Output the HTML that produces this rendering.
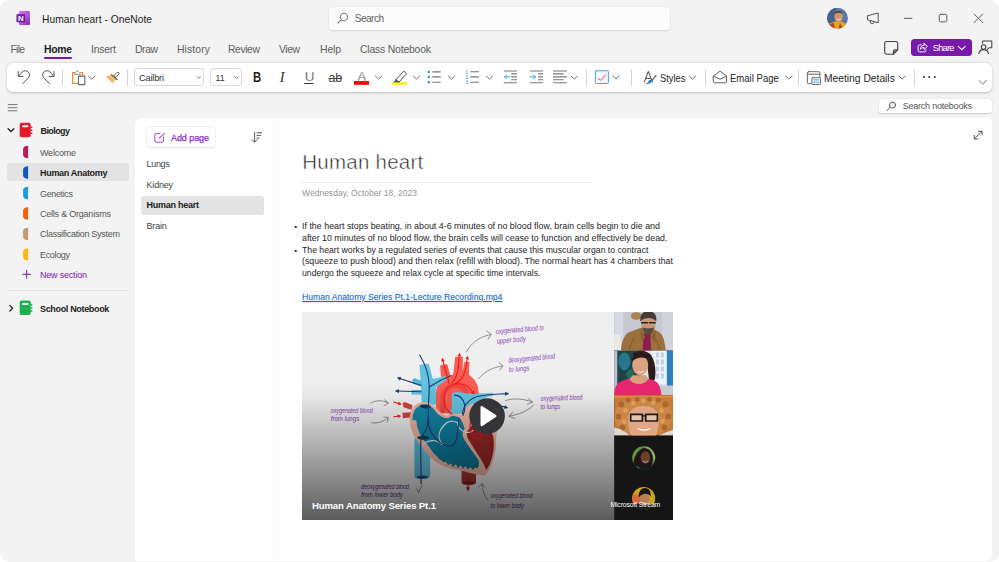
<!DOCTYPE html>
<html lang="en"><head><meta charset="utf-8"><title>Human heart - OneNote</title>
<style>
html,body{margin:0;padding:0;background:#fff}
body{width:999px;height:562px;position:relative;overflow:hidden;font-family:"Liberation Sans",sans-serif}
.abs,.t,svg{position:absolute}
.t{white-space:nowrap;transform-origin:0 50%}
.win{left:0;top:0;width:999px;height:562px;background:#f3f3f3;border-radius:9px}
.search{left:328.5px;top:7px;width:341.5px;height:22.5px;background:#fbfbfb;border-radius:4px;box-shadow:0 0 0 .6px #e6e6e6,0 1px 1.5px rgba(0,0,0,.16);}
.homeul{left:44px;top:56.5px;width:28px;height:2px;background:#7719aa;border-radius:1px}
.ribbon{left:7px;top:63.2px;width:985px;height:28.6px;background:#fff;border-radius:6px;box-shadow:0 .5px 2.5px rgba(0,0,0,.22)}
.sep{width:1px;top:68.8px;height:16.8px;background:#d6d6d6}
.box{top:68.4px;height:17.2px;background:#fff;border:.8px solid #d8d8d8;border-radius:3px;box-sizing:border-box}
.share{left:910.6px;top:38.7px;width:61.8px;height:17.7px;background:#7719aa;border-radius:3.5px}
.snb{left:879.2px;top:98.6px;width:112.9px;height:14.6px;background:#fff;border-radius:3px;box-shadow:0 .5px 1.5px rgba(0,0,0,.18)}
.panel{left:135px;top:118.3px;width:857.4px;height:442.3px;background:#fff;border-radius:6px 5px 6px 0}
.pdiv{left:273px;top:119px;width:1px;height:441px;background:#f4f4f4}
.selsec{left:7px;top:163px;width:122.3px;height:18.4px;background:#e3e3e3;border-radius:3px}
.sbsep{left:7px;top:290px;width:122px;height:1px;background:#e3e3e3}
.addpage{left:147.2px;top:126.600px;width:68.300px;height:20.800px;background:#fff;border-radius:4px;box-shadow:0 0 0 .7px #ebe7ee,0 .5px 1.2px rgba(0,0,0,.10);box-sizing:border-box}
.selpage{left:141px;top:195.8px;width:122.6px;height:19.5px;background:#e3e3e3;border-radius:3px}
.trule{left:302px;top:182px;width:290px;height:1px;background:#ececec}
</style></head><body>
<div class="abs win"></div>
<div class="abs search"></div>
<div class="abs homeul"></div>
<div class="abs share"></div>
<div class="abs ribbon"></div>
<div class="abs sep" style="left:62px"></div>
<div class="abs sep" style="left:126.8px"></div>
<div class="abs sep" style="left:586.2px"></div>
<div class="abs sep" style="left:630.8px"></div>
<div class="abs sep" style="left:704.6px"></div>
<div class="abs sep" style="left:798.2px"></div>
<div class="abs sep" style="left:914px"></div>
<div class="abs box" style="left:134px;width:69.5px"></div>
<div class="abs box" style="left:210px;width:31.5px"></div>
<div class="abs snb"></div>
<div class="abs panel"></div>
<div class="abs pdiv"></div>
<div class="abs selsec"></div>
<div class="abs sbsep"></div>
<div class="abs addpage"></div>
<div class="abs selpage"></div>
<div class="abs trule"></div>
<svg style="left:0;top:0" width="999" height="562" viewBox="0 0 999 562" fill="none" stroke-linecap="round" stroke-linejoin="round">
<defs>
<linearGradient id="gp1" x1="0" y1="0" x2="1" y2="1"><stop offset="0" stop-color="#d575f2"/><stop offset=".55" stop-color="#b552dc"/><stop offset="1" stop-color="#7a1fb0"/></linearGradient>
<linearGradient id="gp2" x1="0" y1="0" x2="1" y2="1"><stop offset="0" stop-color="#8a2dbb"/><stop offset="1" stop-color="#5b0f8c"/></linearGradient>
<clipPath id="avc"><circle cx="837.5" cy="18.2" r="10.4"/></clipPath>
</defs>
<!-- OneNote logo -->
<rect x="18.9" y="10.9" width="11" height="14.2" rx="1.1" fill="url(#gp1)"/>
<rect x="16.4" y="13.9" width="8.7" height="8.4" rx="1" fill="url(#gp2)"/>
<text x="20.75" y="20.9" font-size="7.8" font-weight="700" fill="#fff" text-anchor="middle" font-family="Liberation Sans, sans-serif">N</text>
<!-- title search icon -->
<g stroke="#757575" stroke-width="1.05"><circle cx="344" cy="16.9" r="3.6"/><path d="M341.4 19.6 337.9 23.1"/></g>
<!-- avatar -->
<g clip-path="url(#avc)">
<rect x="827" y="7.5" width="21" height="21.5" fill="#5a79ab"/>
<rect x="827" y="7.5" width="9" height="21.5" fill="#48628f"/>
<path d="M827 29 l2.5-5.5 6-2.2 6.5 .2 5 3 1 4.5z" fill="#e7a21b"/>
<path d="M829 29 l1.5-5 3-1.2 1.5 6.2z" fill="#c23b25"/>
<path d="M840 23 l3 6.2 h-4.5z" fill="#b8321f"/>
<ellipse cx="838.6" cy="16.6" rx="4.3" ry="5.3" fill="#cf9676"/>
<path d="M834 14.5 c.5-4.5 8-5.5 9.3-.3 c-2.5-1.5-6-1.7-9.3 .3z" fill="#6a4631"/>
<path d="M836.8 19.4 q2 1.5 4 0" stroke="#fff" stroke-width=".7"/>
</g>
<!-- megaphone -->
<g stroke="#505050" stroke-width="1"><path d="M878.2 13.3v9.4l-10.8-2.9v-3.6z"/><path d="M870.3 20.7v1.2a1.9 1.9 0 0 0 3.7.6"/></g>
<!-- window buttons -->
<g stroke="#555" stroke-width=".95"><path d="M904.3 18.3h7.6"/><rect x="939.3" y="14.3" width="7.5" height="7.6" rx="1.4"/><path d="M974.1 14l8.6 8.6M982.7 14l-8.6 8.6"/></g>
<!-- sticky note -->
<g stroke="#444" stroke-width="1.15"><path d="M886.6 41.5h9.2a1.9 1.9 0 0 1 1.9 1.9v6.5l-4.3 4.3h-6.8a1.9 1.9 0 0 1-1.9-1.9v-8.9a1.9 1.9 0 0 1 1.9-1.9z"/><path d="M897.6 49.9h-2.6a1.6 1.6 0 0 0-1.6 1.6v2.6"/><path d="M897 50.6l-3 3v-1.800a1.200 1.200 0 0 1 1.200-1.200z" fill="#555" stroke="none"/></g>
<!-- share icon -->
<g stroke="#fff" stroke-width=".95"><path d="M921.3 44.9h-1.7a1.5 1.5 0 0 0-1.5 1.5v4a1.5 1.5 0 0 0 1.5 1.5h4.8a1.5 1.5 0 0 0 1.5-1.5v-.7"/><path d="M924.1 43.4l3.3 3-3.3 3v-1.9c-1.8 0-3 .6-3.8 1.9.2-2.6 1.6-4 3.8-4.2z"/><path d="M958.2 46.4l3.5 3.3 3.5-3.3" stroke-width="1.05"/></g>
<!-- person feedback -->
<g stroke="#444" stroke-width="1.05"><circle cx="983.6" cy="47" r="2.3"/><path d="M978.8 53.6c.4-2.6 2.2-4 4.8-4s4.4 1.4 4.8 4"/><path d="M982.6 43.2v-2.2h9.2v6.7h-2.6l-1.7 1.7"/></g>
<!-- ribbon: undo / redo -->
<g stroke="#555" stroke-width="1"><path id="undo" d="M18.4 76.3 22.2 72A4.2 4.2 0 0 1 28.3 78L22.6 83.6M18.2 71.5v4.9h4.9"/><use href="#undo" transform="translate(72.2 0) scale(-1 1)"/></g>
<!-- paste -->
<g stroke-width="1.25"><path d="M75 72.700h-2.400v10.600h5.200M80.200 72.700h2.400v2.700" stroke="#ee8f2f" stroke-linejoin="miter" stroke-linecap="butt"/><path d="M74.500 74.100l2.900-3.700 2.900 3.700z" stroke="#8a8a8a" stroke-width=".9" fill="#fff"/><rect x="78.400" y="76.100" width="6.400" height="8.500" rx=".7" stroke="#606060" stroke-width="1.100" fill="#fff"/></g>
<!-- format painter -->
<g><path d="M106.200 76.400l5.300-1.300 4.700 4.400-3.900 3.500z" fill="#f6a64f"/><path d="M108.600 77l4.600 4.300M110.600 76.300l3.700 3.600" stroke="#fde0c0" stroke-width=".7"/><rect x="-1.150" y="-5.800" width="2.300" height="5.800" rx=".9" transform="translate(114.400 76.800) rotate(45)" fill="#fff" stroke="#555" stroke-width=".9"/><path d="M111.300 74.300l5.900 5.400" stroke="#555" stroke-width="1.100"/></g>
<!-- chevrons -->
<g stroke="#666" stroke-width=".95">
<path d="M88.400 76.100l3.250 3 3.250-3"/>
<path d="M197 76.700l1.750 1.750 1.750-1.750"/><path d="M234.900 76.700l1.750 1.750 1.750-1.750"/>
<path d="M375.4 76l3.25 3.1 3.25-3.1"/><path d="M413.2 76l3.25 3.1 3.25-3.1"/><path d="M448.2 76l3.25 3.1 3.25-3.1"/><path d="M486.2 76l3.25 3.1 3.25-3.1"/>
<path d="M571.1 76l3.25 3.1 3.25-3.1"/><path d="M612.8 76l3.2 3.1 3.2-3.1"/><path d="M689.3 76l3.2 3.1 3.2-3.1"/><path d="M785.7 76l3.2 3.1 3.2-3.1"/><path d="M899 76l3.2 3.1 3.2-3.1"/>
<path d="M978.9 80.4l3.8 3.7 3.8-3.7"/>
</g>
<!-- underline bar for U -->
<path d="M304.6 83.5h8.6" stroke="#333" stroke-width="1"/>
<!-- font colour / highlighter -->
<rect x="354" y="81" width="15" height="3.8" fill="#fe0000"/>
<rect x="391.9" y="82.2" width="15" height="2.6" fill="#fff000"/>
<g stroke="#555" stroke-width="1"><path d="M396.2 79.3l6.6-7.2a1.7 1.7 0 0 1 2.4-.1l.4.4a1.7 1.7 0 0 1 .1 2.4l-6.6 7.1z"/><path d="M396.2 79.3l-.9 1.6-1.4 1 2.6-.1 2.5.1" fill="#555"/></g>
<!-- bullets -->
<g fill="#1479d4"><rect x="427.8" y="70.9" width="2" height="2"/><rect x="427.8" y="75.9" width="2" height="2"/><rect x="427.8" y="81.2" width="2" height="2"/></g>
<g stroke="#777" stroke-width="1.1" stroke-linecap="butt"><path d="M432.3 71.9h8.4M432.3 76.9h8.4M432.3 82.2h8.4"/><path d="M470.3 71.7h8.7M470.3 76.9h8.7M470.3 82.2h8.7"/>
<path d="M503.8 71h13.1M511.2 73.9h5.7M511.2 76.9h5.7M511.2 79.8h5.7M503.8 82.7h13.1"/>
<path d="M530 71h13.1M538 73.9h5.1M538 76.9h5.1M538 79.8h5.1M530 82.7h13.1"/>
<path d="M553 71h14M553 73.9h10.8M553 76.9h14M553 79.8h10.8M553 82.7h14"/></g>
<g font-family="Liberation Sans, sans-serif" font-size="4.8" font-weight="400" fill="#1f7fd6" text-anchor="middle"><text x="466.9" y="73.6">1</text><text x="466.9" y="78.7">2</text><text x="466.9" y="83.9">3</text></g>
<g stroke="#2b9be0" stroke-width=".95"><path d="M509.8 76.9h-5.2M506.6 74.8l-2.1 2.1 2.1 2.1"/><path d="M530.3 76.9h5.2M533.4 74.8l2.1 2.1-2.1 2.1"/></g>
<!-- checkbox -->
<rect x="595.4" y="70.8" width="13" height="12.7" rx=".8" fill="#f5fafe" stroke="#4aa0e2" stroke-width="1"/>
<path d="M598.2 78.5l2.4 1.8 5-5.3" stroke="#ea3e4c" stroke-width=".95"/>
<!-- styles -->
<g><path d="M644.3 82l4-10.7 4 10.7M645.8 78.4h5" stroke="#444" stroke-width="1"/><path d="M655.900 75.600l-4.500 5.600" stroke="#606060" stroke-width="1.300"/><path d="M645.100 82.900c2.200 1.900 6.200.900 7-2.400-1.300-.900-3-.400-3.700.900-.700 1.200-1.800 1.700-3.300 1.500z" fill="#2b7cd3"/></g>
<!-- email -->
<g stroke="#555" stroke-width=".95"><path d="M713.4 76l6.6-4.8 6.6 4.8v5.9a.9.9 0 0 1-.9.9h-11.4a.9.9 0 0 1-.9-.9z"/><path d="M713.5 76.3l6.5 2.9 6.5-2.9"/></g>
<!-- meeting -->
<g stroke="#606060" stroke-width=".95"><rect x="807.4" y="71.7" width="12.5" height="11.9" rx="1" fill="#fff"/><path d="M807.4 74.2h12.5" /><rect x="811.9" y="77.7" width="8.7" height="6.8" rx=".8" fill="#fff"/><path d="M813.6 79.9h5.4M813.6 82.2h5.4" stroke="#3a96dd"/></g>
<!-- more dots -->
<g fill="#333"><circle cx="923.8" cy="77" r="1.05"/><circle cx="929.3" cy="77" r="1.05"/><circle cx="934.8" cy="77" r="1.05"/></g>
<!-- search notebooks icon -->
<g stroke="#555" stroke-width="1"><circle cx="892.5" cy="105.1" r="3"/><path d="M890.3 107.3l-3.3 3.2"/></g>
<!-- hamburger -->
<path d="M8.2 104.6h8.8M8.2 107.7h8.8M8.2 110.8h8.8" stroke="#6a6a6a" stroke-width=".9"/>
<!-- sidebar chevrons -->
<g stroke="#222" stroke-width="1.350"><path d="M8.100 128.800l2.850 2.700 2.850-2.700"/><path d="M9.800 305.400l2.800 2.850-2.800 2.850"/></g>
<!-- notebooks -->
<g><rect x="19.7" y="122.8" width="11" height="14.4" rx="1.9" fill="#e3182d"/><rect x="22.300" y="125.300" width="6" height="2" rx=".5" fill="#fff"/><path d="M30.600 127.200h1.700M30.600 130.200h1.700M30.600 133.200h1.700" stroke="#e3182d" stroke-width="1.600" stroke-linecap="butt"/></g>
<g><rect x="19.7" y="300.4" width="11" height="14.7" rx="1.9" fill="#1db24f"/><rect x="22.300" y="303" width="6" height="2" rx=".5" fill="#fff"/><path d="M30.600 304.900h1.700M30.600 307.900h1.700M30.600 310.900h1.700" stroke="#1db24f" stroke-width="1.600" stroke-linecap="butt"/></g>
<!-- section tabs -->
<g>
<path id="tab" d="M28.1 145.8c-3.2.2-5 1.3-5 3.5v5.4c0 2.2 1.8 3.3 5 3.5z" fill="#c3175b"/>
<path d="M28.1 166.3c-3.2.2-5 1.3-5 3.5v5.4c0 2.2 1.8 3.3 5 3.5z" fill="#0f5bb5"/>
</g>
<path d="M28.1 186.8c-3.2.2-5 1.3-5 3.5v5.4c0 2.2 1.8 3.3 5 3.5z" fill="#1b9fe0"/>
<path d="M28.1 207.3c-3.2.2-5 1.3-5 3.5v5.4c0 2.2 1.8 3.3 5 3.5z" fill="#f4620e"/>
<path d="M28.1 227.8c-3.2.2-5 1.3-5 3.5v5.4c0 2.2 1.8 3.3 5 3.5z" fill="#c19a6f"/>
<path d="M28.1 248.2c-3.2.2-5 1.3-5 3.5v5.4c0 2.2 1.8 3.3 5 3.5z" fill="#fdb812"/>
<path d="M26.7 270.3v8M22.7 274.3h8" stroke="#7719aa" stroke-width="1"/>
<!-- add page icon -->
<g stroke="#a252d3" stroke-width="1.100"><path d="M160 133.500h-3.300a1.900 1.900 0 0 0-1.900 1.900v4.900a1.900 1.900 0 0 0 1.900 1.900h4.900a1.900 1.900 0 0 0 1.900-1.900v-3.300"/><path d="M159.300 138.400l5-5.100"/></g>
<!-- sort icon -->
<g stroke="#555" stroke-width="1"><path d="M254.6 132.6v9.3M252 139.6l2.6 2.6 2.6-2.6"/><path d="M257 132.8h4.6M257 135.4h3.4M257 138h2.1"/></g>
<!-- expand icon -->
<g stroke="#555" stroke-width="1"><path d="M974.4 138.8l7.5-7.3M978.4 131.3h3.7v3.7M974.2 135.3v3.7h3.7"/></g>
</svg>

<svg style="left:301.6px;top:311.5px" width="371.6" height="208.4" viewBox="301.6 311.5 371.6 208.4" fill="none" stroke-linecap="round" stroke-linejoin="round" font-family="Liberation Sans, sans-serif">
<defs>
<linearGradient id="vshade" x1="0" y1="0" x2="0" y2="1"><stop offset="0" stop-color="#000" stop-opacity="0"/><stop offset=".34" stop-color="#000" stop-opacity="0"/><stop offset=".42" stop-color="#000" stop-opacity=".05"/><stop offset="1" stop-color="#000" stop-opacity=".62"/></linearGradient>
<linearGradient id="teal" x1="0" y1="0" x2="1" y2="1"><stop offset="0" stop-color="#1789a9"/><stop offset=".45" stop-color="#0e7f9f"/><stop offset="1" stop-color="#09708f"/></linearGradient>
<clipPath id="vclip"><rect x="301.6" y="311.5" width="371.6" height="208.4"/></clipPath>
<clipPath id="t1"><rect x="613.7" y="311.5" width="59.5" height="38.6"/></clipPath>
<clipPath id="t2"><rect x="613.7" y="350.1" width="59.5" height="44.6"/></clipPath>
<clipPath id="t3"><rect x="613.7" y="394.7" width="59.5" height="40.4"/></clipPath>
<clipPath id="a1"><circle cx="643.3" cy="457.3" r="11.5"/></clipPath>
<clipPath id="a2"><circle cx="643.3" cy="498" r="11.5"/></clipPath>
<marker id="mb" viewBox="0 0 6 6" refX="4" refY="3" markerWidth="3.5" markerHeight="3.5" orient="auto"><path d="M0 0L6 3 0 6z" fill="#1f3f7d"/></marker>
<marker id="mr" viewBox="0 0 6 6" refX="4" refY="3" markerWidth="3.5" markerHeight="3.5" orient="auto"><path d="M0 0L6 3 0 6z" fill="#f21414"/></marker>
<marker id="mdr" viewBox="0 0 6 6" refX="4" refY="3" markerWidth="3.8" markerHeight="3.8" orient="auto"><path d="M0 0L6 3 0 6z" fill="#c01818"/></marker>
</defs>
<g clip-path="url(#vclip)">
<rect x="301.6" y="311.5" width="312.2" height="208.4" fill="#efefef"/>
<!-- inferior vena cava -->
<path d="M414.2 438h15.6v38.4a7.8 2.2 0 0 1-15.6 0z" fill="#62c3df"/>
<path d="M414.2 438h5v40h-5z" fill="#4fb2d2" opacity=".55"/>
<ellipse cx="422" cy="476.5" rx="5.6" ry="1.5" fill="#1c4f6c"/>
<!-- superior vena cava + left stubs -->
<path d="M419 364.200l9.500-.900 3.400 13.500 3.600 7.500 1.200 20h-15.400l-.600-16z" fill="#62c3df"/>
<path d="M411.6 379.8l2.1-2.4 8.3 3.3-.9 4.4-8.2-2.6z" fill="#52b6d6"/>
<path d="M411.2 389.6h10.5v4.3h-10.5z" fill="#52b6d6"/>
<path d="M413 381l8.6 2.8v2.2l-9-2.8zM412.5 391h9v2.6h-9z" fill="#62c3df"/>
<!-- branch from SVC to upper right (behind aorta) -->

<!-- aorta -->
<path d="M435.6 413v-18.5c0-6.5 1.6-12 5.3-16.2l-1.2-13.2 7-1.6 3.6 12.6 2.6-2.5 1.9-17.3h7.7l-.3 14.2 1.9-9.2h4.9l-.4 13.3c5.9 3.7 9.6 9.8 9.6 17.600v20.800z" fill="#f95c53"/>
<path d="M440 412v-14c0-9 6.400-15.500 14.700-15.500 7.300 0 12.700 4 14.300 10.500l-4.600 1c-1.400-4.300-5-6.700-9.700-6.700-5.600 0-9.700 4.300-9.700 10.700v14z" fill="#e8403b" opacity=".75"/>
<path d="M431.800 378.600l13.600-3 1 3.600-10.600 7.600-3 .2z" fill="#62c3df"/>
<!-- pulmonary artery (light blue) -->
<path d="M452 392.500c3-1.200 7.500-1.300 11 0 8 1 18 1 29.400-.2l.2 2.600c-8 1.800-15 4.600-19.600 9.100l-5.500 8.500-18.500 1.500c1-3 2.500-6 2.600-9.500.1-4-1-8.500.4-12z" fill="#62c3df"/>
<!-- pulmonary veins (left, red) -->
<path d="M402.300 402.700l2-1.300 8 3.300-1.300 4.600-8-2.600z" fill="#cf4440"/>
<path d="M402 412.300l9-.6.500 5-9 1z" fill="#cf4440"/>
<!-- descending aorta stub -->
<path d="M461.200 466h14.400v16.500a7.200 2.200 0 0 1-14.400 0z" fill="#a9332e"/>
<ellipse cx="468.400" cy="482.300" rx="5.400" ry="1.300" fill="#7c1f1c"/>
<!-- heart body: pink rim -->
<path d="M409.300 421c-.6-9 3-16.200 9.700-18.800 7-2.200 14 .8 18 6.300 3 4 6 6.500 9.800 6.500 2.600-2.600 8.400-3 13.200-.5 2.500-4.500 6.500-9 12.500-11.500l22 12c4 8 1.500 17 1.200 24 .5 8-1.200 17-3.700 23-1.800 5.500-4.500 10.500-8 13.500-8-1.500-21-5-33.500-7.500-10-2-19-8-25.200-16.500-7.500-9-15.500-19-16-30.500z" fill="#edb4a3"/>
<!-- teal chambers -->
<path d="M411.300 420.500c-.4-8 3-14 8.700-16.300 6-1.800 12 .8 15.500 5.800 3.300 4.600 7.500 7.200 12 7 2.500-2.800 7.500-3 12-.6 2.500 3.500 4.500 7.500 5.500 11.600-2 3-2.800 6-1.500 9 4.500 8 10.500 15 15.500 23 1 4-.5 7.500-3 9.500-3-.8-4 1.500-7-.5-2.500.8-4.500-.8-7-.5-3 .6-5-1.500-7.500-1.300-2.500-.2-4-2.200-6.500-2.200-3-1-5-3.300-7.500-4-3-2.500-5-5.300-7.500-7.500-2.500-3.500-5-6.500-7-9.800-5.500-5.500-10.300-14.500-10.700-23.200z" fill="url(#teal)" stroke="#edb4a3" stroke-width="1.400"/>
<g fill="#edb4a3"><circle cx="431.5" cy="454.5" r="1.500"/><circle cx="435.5" cy="458" r="1.500"/><circle cx="440" cy="460.8" r="1.500"/><circle cx="445" cy="462.8" r="1.500"/><circle cx="450" cy="464.5" r="1.500"/><circle cx="455" cy="465.6" r="1.500"/><circle cx="460" cy="466.8" r="1.500"/><circle cx="465" cy="467.6" r="1.500"/><circle cx="470" cy="468.4" r="1.500"/><circle cx="475" cy="468.6" r="1.500"/></g>
<ellipse cx="425" cy="406" rx="5.400" ry="1.900" fill="#0a3d55" transform="rotate(6 425 406)"/>
<ellipse cx="422.700" cy="437.200" rx="5.800" ry="2" fill="#0a3d55"/>
<!-- left ventricle (dark red) -->
<path d="M466.500 430c3-5 8-9.500 15.500-9 8 2.500 12 11.500 12.300 21 .3 10-2 20-8.500 29.500-1.500-4.500-3.500-9-6-12.500-4.500-7-9.500-14-13.500-21.500-1.200-2.600-.8-5.500.200-7.500z" fill="#8f2424" stroke="#edb4a3" stroke-width="1.600"/>
<path d="M474 428c5-3 11-2 14.500 4 3.500 7 3.500 17 .5 26-2 5-3.500 7-4.500 9-1.500-4-3-7-5-10.500-3.500-5.500-7.500-11-10.500-17 0-5 2-9 5-11.500z" fill="#a32a2a" opacity=".55"/>
<!-- valve / chordae lines -->
<g stroke="#dcebf0" stroke-width="1.100" fill="none"><path d="M446.600 422c-5 4-8.500 9.500-8 15 .5 3 2 5 3.500 6.500"/><path d="M446.600 422c3.500-1.600 7.500-1.600 10.500.2"/><path d="M457 422.500c.5 4 3 7.500 7.500 9 3 1 6 .2 8-1.500"/><path d="M422.500 444c3.500-3 9-4.500 13.500-3.500 2.500.6 4.500 2 5.500 3.500"/></g>
<!-- dark blue flow lines -->
<g stroke="#1f3f7d" stroke-width="1.150" fill="none">
<path d="M419.300 354.500c6 10 9.300 20 9.500 31 .2 8-1 16-.8 24 .2 9-1.500 15 3 22.500 4 6.500 9 12 16 13.500 5 1 8-2 9-6.500 1.500-6.500 1.600-13 2.500-20"/>
<path d="M428.800 386.500c6-4 12-7.500 22-11.500" />
<path d="M428 416c-1.500 5 0 9 -2 13-2.500 4-5.300 6-5.600 11-.3 12 .3 25 .3 43"/>
<path d="M420.600 384.900l-22.800-7.400" marker-end="url(#mb)"/>
<path d="M420.600 391.300l-24.800-.8" marker-end="url(#mb)"/>
<path d="M454 394.600c5 0 8 3 9.500 7 1.500 4.500 1 9-1 13.500"/>
<path d="M462 413c1-7 5-12.500 11-15.500 7-3.500 20-3.500 34.500-4.400" marker-end="url(#mb)"/>
<path d="M489 402.500l17.500 4.600" marker-end="url(#mb)"/>
</g>
<!-- bright red flow lines -->
<g stroke="#f31616" stroke-width="1.050" fill="none">
<path d="M451.500 413.500c-5-3-8-8-8-14.500 0-9 5-14.500 12-15.500 8-1 14 3 17.500 9.500" marker-end="url(#mr)"/>
<path d="M448.500 383c-1-5-3.500-14-6.500-24.500" marker-end="url(#mr)"/>
<path d="M451.500 382.500c4-3.500 6.500-9 7.500-29" marker-end="url(#mr)"/>
<path d="M454 383.500c7-3.500 11.500-9 13-27" marker-end="url(#mr)"/>
<path d="M393.300 401.600l6.800 2" marker-end="url(#mr)"/>
<path d="M393.300 416.200l6.300-.6" marker-end="url(#mr)"/>
<path d="M470 421c-1 5 0 12 3.500 16 3 2.500 7 1 8-3 1-5 0-9-1-13"/>
</g>
<path d="M467.600 476v13.500" stroke="#c01818" stroke-width="1.100" marker-end="url(#mdr)"/>
<!-- grey annotation arrows -->
<g stroke="#7a7a7a" stroke-width=".8" fill="none">
<path d="M466 351.500c5-9 12-15 24.500-17.500M486.500 330.500l4.300 3.300-3 4.600"/>
<path d="M477.800 378.500c7-8 14-11.500 24.500-13M498.500 362l4 3.300-3.200 4.300"/>
<path d="M505 400c9-2.500 18-2 27 1.600M528 398l4.300 3.600-5.300 2.200"/>
<path d="M533.500 404.500c-7 6.500-15 9.500-24.500 11M512.500 411.500l-4 4.300 5.800 2.200"/>
<path d="M370.300 402.600c5-3 11-3.300 17.500-.2M384.300 399.300l3.700 3.300-4.400 2.600"/>
<path d="M371.300 422.300c6 .8 12-1 16.500-5.300M383.600 416.600l4.300.3-.9 4.600"/>
<path d="M416.500 488l1.600 4.500 3.500-8"/>
<path d="M487.500 500c-3.600-5-5.600-10-6-16.500M478.500 486.500l3-3.300 3 3.300"/>
</g>
<!-- handwritten annotations -->
<g fill="#8b3fb8" font-style="italic" font-size="7.600">
<text transform="translate(495.600 333.400) rotate(-4.500)" textLength="48" lengthAdjust="spacingAndGlyphs">oxygenated blood to</text>
<text transform="translate(496.500 343.200) rotate(-5)" textLength="29" lengthAdjust="spacingAndGlyphs">upper body</text>
<text transform="translate(508 362.300) rotate(-5.300)" textLength="47" lengthAdjust="spacingAndGlyphs">deoxygenated blood</text>
<text transform="translate(508.500 371.600) rotate(-4)" textLength="20.500" lengthAdjust="spacingAndGlyphs">to lungs</text>
<text transform="translate(540.300 400.400) rotate(-1.600)" textLength="41.700" lengthAdjust="spacingAndGlyphs">oxygenated blood</text>
<text transform="translate(540 408.800) rotate(-1.600)" textLength="20" lengthAdjust="spacingAndGlyphs">to lungs</text>
<text transform="translate(330.300 412.200)" textLength="42" lengthAdjust="spacingAndGlyphs">oxygenated blood</text>
<text transform="translate(330.300 420.300)" textLength="28.500" lengthAdjust="spacingAndGlyphs">from lungs</text>
</g>
<g fill="#5c2a86" font-style="italic" font-size="7.600">
<text transform="translate(360.600 488.200)" textLength="48" lengthAdjust="spacingAndGlyphs">deoxygenated blood</text>
<text transform="translate(360.600 496.600)" textLength="41.800" lengthAdjust="spacingAndGlyphs">from lower body</text>
<text transform="translate(490.100 498)" textLength="41.900" lengthAdjust="spacingAndGlyphs">oxygenated blood</text>
<text transform="translate(490 507.200)" textLength="33.400" lengthAdjust="spacingAndGlyphs">to lower body</text>
</g>
<!-- bottom shade -->
<rect x="301.600" y="311.500" width="312.200" height="208.400" fill="url(#vshade)"/>
<!-- play button -->
<circle cx="486.700" cy="415.600" r="17.800" fill="#353538"/>
<path d="M481.300 406.800l13.600 8.800-13.600 8.800z" fill="#fff" stroke="#fff" stroke-width="2.400"/>

<!-- participants column -->
<rect x="613.700" y="311.500" width="59.500" height="208.400" fill="#151515"/>
<g clip-path="url(#t1)">
<rect x="613.700" y="311.500" width="59.500" height="38.600" fill="#c6c8d3"/>
<rect x="613.700" y="311.500" width="9" height="38.600" fill="#d6d9e3"/>
<rect x="662" y="311.500" width="11.200" height="38.600" fill="#d0d2dc"/>
<ellipse cx="636" cy="315.500" rx="5.500" ry="3.800" fill="#a98550"/>
<path d="M613.700 334h6l1.500 16.100h-7.500z" fill="#ece9e4"/>
<path d="M620.500 350.200c.5-10 3.500-16.500 9.500-19l10-3.600 11 .5c6.500 2 10.500 4.500 12.500 11l2 11.100z" fill="#9c6f3d"/>
<path d="M629 350.200c1-6 2.500-10 5-13M659 350.200c-.6-5-1.600-8-3.600-11" stroke="#85592c" stroke-width="1"/>
<path d="M643.500 333l6.500-.5.600 17.700h-8.500z" fill="#8c1d4c"/>
<path d="M640.500 329l4.500 7.500-4.500 5zM655 329.500l-4 7.500 4 5.500z" fill="#8a5f31"/>
<ellipse cx="648" cy="323.600" rx="7.300" ry="9.600" fill="#c89877"/>
<path d="M640 321c-1-7 3-10.500 8-10.500 5.500 0 8.800 4 7.800 10.500-2.500-4-11-5-15.800 0z" fill="#463b34"/>
<path d="M641.800 327c1.200 5 3.600 7.300 6.200 7.300s5-2.300 6-7.500c-2.600 1.200-9.400 1.400-12.200.2z" fill="#5b4b41"/>
<path d="M641.200 322.300h5.800M649 322.300h5.800" stroke="#2a2424" stroke-width="1.500"/>
</g>
<g clip-path="url(#t2)">
<rect x="613.700" y="350.100" width="59.500" height="44.600" fill="#dfe6ef"/>
<rect x="613.700" y="350.100" width="27" height="44.600" fill="#1c4548"/>
<rect x="613.700" y="350.100" width="3.200" height="44.600" fill="#b9c3cf"/>
<ellipse cx="624" cy="361" rx="6" ry="9" fill="#2d87a3" opacity=".75"/>
<ellipse cx="630" cy="374" rx="4" ry="5" fill="#2c6e6a" opacity=".8"/>
<rect x="652" y="350.100" width="14" height="33" fill="#eef3f8"/>
<g fill="#c0d1e6"><rect x="655.500" y="352" width="3" height="5"/><rect x="660.500" y="352" width="3" height="5"/><rect x="655.500" y="359" width="3" height="5"/><rect x="660.500" y="359" width="3" height="5"/><rect x="655.500" y="366" width="3" height="5"/><rect x="660.500" y="366" width="3" height="5"/><rect x="655.500" y="373" width="3" height="5"/><rect x="660.500" y="373" width="3" height="5"/></g>
<rect x="666.500" y="350.100" width="6.700" height="37" fill="#2e7fc0"/>
<rect x="652" y="385" width="21.200" height="9.700" fill="#c6cad1"/>
<path d="M632 354c4-4.500 15-4.500 19 1 3.500 5.500 5 15 3.500 23.500-1.500 4-3.500 5-5.500 4l-2.500-22z" fill="#2b1b1a"/>
<path d="M613.700 394.700c0-8 3-13 9.500-15l8.500-2.500h13l8 2.500c5 1.700 7.500 6 8.300 15z" fill="#e8266f"/>
<path d="M629 378.500c3.500 6.500 15 7 19 .3l-2.500-4h-13z" fill="#d9a07e"/>
<ellipse cx="639.800" cy="364.500" rx="8" ry="10.400" fill="#dba37f"/>
<path d="M631.500 361c.5-8 5.500-11.500 10-11 5.500.5 8.500 4.500 8 11-3.500-4.500-11.500-6-18 0z" fill="#2b1b1a"/>
<path d="M635.800 369.800c2.300 2 6 2 8.500 0-1.700 3.200-6.500 3.400-8.500 0z" fill="#fff"/>
</g>
<g clip-path="url(#t3)">
<rect x="613.700" y="394.700" width="59.500" height="40.400" fill="#c47a38"/>
<rect x="613.700" y="394.700" width="59.500" height="2.500" fill="#e58a3c"/>
<ellipse cx="643" cy="416" rx="29" ry="21" fill="#cb8745"/>
<g fill="#aa6a2f"><circle cx="621" cy="404" r="3"/><circle cx="628" cy="399.500" r="2.600"/><circle cx="665" cy="404" r="3"/><circle cx="658" cy="399.500" r="2.600"/><circle cx="618" cy="416" r="3"/><circle cx="668" cy="416" r="3"/><circle cx="622" cy="427" r="3"/><circle cx="664" cy="427" r="3"/><circle cx="637" cy="399" r="2.400"/><circle cx="649" cy="399" r="2.400"/></g>
<g fill="#dba059"><circle cx="625" cy="410" r="2.400"/><circle cx="661" cy="410" r="2.400"/><circle cx="633" cy="402.500" r="2.200"/><circle cx="653" cy="402.500" r="2.200"/><circle cx="643" cy="400.500" r="2.200"/><circle cx="624" cy="421" r="2.200"/><circle cx="662" cy="421" r="2.200"/></g>
<path d="M630.500 435.100c-2.500-6-3.500-13-2.500-20 1.500-6.500 7.500-9.500 15-9.500s13.500 3 15 9.500c1 7-.0 14-2.500 20z" fill="#e3a685"/>
<path d="M630.300 413.800h11.700v6.700h-11.700zM645.300 413.800h11.700v6.700h-11.700z" fill="#e6c3ad" stroke="#1b1b1b" stroke-width="1.700"/>
<path d="M642 415.300h3.300" stroke="#1b1b1b" stroke-width="1.300"/>
<path d="M636.500 427c3.800 2.600 10.700 2.600 14.500 0-2.200 4.200-11.800 4.700-14.500 0z" fill="#fff"/>
<path d="M613.700 427l6 1.500 6 3.500 4 3.100h-16zM673.200 429l-7 2.500-8 3.600h15z" fill="#dcd8d4"/>
</g>
<g clip-path="url(#a1)">
<rect x="631" y="445" width="25" height="25" fill="#5f8f48"/>
<path d="M645 445h11v14h-8z" fill="#86b25e"/>
<path d="M633 470c-1-10 2-19 10-22.500 6 0 9 4 9.500 10l-1 12.500z" fill="#1f1613"/>
<ellipse cx="645" cy="457" rx="4.800" ry="6.200" fill="#6a3f2c"/>
<path d="M642.300 460.300c1.800 1.500 4.200 1.500 6 0-1.200 2.200-4.800 2.400-6 0z" fill="#f2f2f2"/>
<path d="M636 470c1-3.500 4-5 9-5s8.500 1.500 9.500 5z" fill="#17171a"/>
<path d="M637 466.500l3 2.500" stroke="#1f8f86" stroke-width="1.200"/>
</g>
<g clip-path="url(#a2)">
<rect x="631" y="486" width="25" height="25" fill="#c9a51c"/>
<rect x="631" y="494" width="9" height="10" fill="#d9683a"/>
<path d="M631 503h25v8h-25z" fill="#1b1b1b"/>
<ellipse cx="644.200" cy="498.300" rx="5" ry="6.400" fill="#b98058"/>
<path d="M638.300 497c-.3-6.500 3-9.500 6.200-9.500 4 0 6.500 3.500 5.800 8.500-2.500-3.500-8-4-12 1z" fill="#1b1412"/>
<path d="M634 511c1-4.500 4-6.500 10-6.500s9 2 10 6.500z" fill="#1d1d1f"/>
</g>

</g>
</svg>

<div class="t" style="left:42px;top:13px;font-size:10.2px;line-height:14px;color:#222;letter-spacing:0.063px">Human heart - OneNote</div>
<div class="t" style="left:354.7px;top:12px;font-size:10.2px;line-height:14px;color:#666;letter-spacing:-0.576px">Search</div>
<div class="t" style="left:10.5px;top:42px;font-size:10.4px;line-height:15px;color:#5e5e5e;letter-spacing:-0.75px">File</div>
<div class="t" style="left:91px;top:42px;font-size:10.4px;line-height:15px;color:#5e5e5e;letter-spacing:-0.2px">Insert</div>
<div class="t" style="left:135px;top:42px;font-size:10.4px;line-height:15px;color:#5e5e5e;letter-spacing:-0.417px">Draw</div>
<div class="t" style="left:177px;top:42px;font-size:10.4px;line-height:15px;color:#5e5e5e;letter-spacing:0.109px">History</div>
<div class="t" style="left:228px;top:42px;font-size:10.4px;line-height:15px;color:#5e5e5e;letter-spacing:-0.416px">Review</div>
<div class="t" style="left:279px;top:42px;font-size:10.4px;line-height:15px;color:#5e5e5e;letter-spacing:-0.448px">View</div>
<div class="t" style="left:320px;top:42px;font-size:10.4px;line-height:15px;color:#5e5e5e;letter-spacing:-0.125px">Help</div>
<div class="t" style="left:360px;top:42px;font-size:10.4px;line-height:15px;color:#5e5e5e;letter-spacing:-0.181px">Class Notebook</div>
<div class="t" style="left:44px;top:42px;font-size:10.4px;line-height:15px;color:#1b1b1b;font-weight:700;letter-spacing:-0.292px">Home</div>
<div class="t" style="left:139px;top:72px;font-size:9.2px;line-height:13px;color:#333;letter-spacing:-0.174px">Cailbri</div>
<div class="t" style="left:215.6px;top:72px;font-size:8.8px;line-height:12px;color:#333">11</div>
<div class="t" style="left:252.7px;top:67px;font-size:14.2px;line-height:20px;color:#222;font-weight:700;transform:scaleX(.8)">B</div>
<div class="t" style="left:279.8px;top:67px;font-size:14.5px;line-height:20px;color:#333;font-style:italic;font-family:'Liberation Serif',serif">I</div>
<div class="t" style="left:304.8px;top:67px;font-size:13.5px;line-height:19px;color:#333;-webkit-text-stroke:.3px #fff">U</div>
<div class="t" style="left:328.4px;top:70px;font-size:12.4px;line-height:17px;color:#444;text-decoration:line-through">ab</div>
<div class="t" style="left:357.5px;top:68px;font-size:13px;line-height:18px;color:#333;-webkit-text-stroke:.35px #fff">A</div>
<div class="t" style="left:659.6px;top:71px;font-size:10.8px;line-height:15px;color:#262626;transform:scaleX(0.8638)">Styles</div>
<div class="t" style="left:730.4px;top:71px;font-size:10.8px;line-height:15px;color:#262626;transform:scaleX(0.8838)">Email Page</div>
<div class="t" style="left:823.8px;top:71px;font-size:10.8px;line-height:15px;color:#262626;transform:scaleX(0.9513)">Meeting Details</div>
<div class="t" style="left:932.8px;top:42px;font-size:9.2px;line-height:13px;color:#fff;letter-spacing:-0.733px">Share</div>
<div class="t" style="left:902.7px;top:100px;font-size:9px;line-height:13px;color:#555;letter-spacing:-0.218px">Search notebooks</div>
<div class="t" style="left:40.5px;top:125px;font-size:9px;line-height:13px;color:#1b1b1b;font-weight:700;letter-spacing:-0.583px">Biology</div>
<div class="t" style="left:40px;top:147px;font-size:9px;line-height:13px;color:#555;letter-spacing:-0.227px">Welcome</div>
<div class="t" style="left:40px;top:167px;font-size:9px;line-height:13px;color:#1b1b1b;font-weight:700;letter-spacing:-0.307px">Human Anatomy</div>
<div class="t" style="left:40px;top:188px;font-size:9px;line-height:13px;color:#555;letter-spacing:-0.362px">Genetics</div>
<div class="t" style="left:40px;top:208px;font-size:9px;line-height:13px;color:#555;letter-spacing:-0.221px">Cells &amp; Organisms</div>
<div class="t" style="left:40px;top:228px;font-size:9px;line-height:13px;color:#555;letter-spacing:-0.277px">Classification System</div>
<div class="t" style="left:40px;top:249px;font-size:9px;line-height:13px;color:#555;letter-spacing:-0.339px">Ecology</div>
<div class="t" style="left:40px;top:269px;font-size:9px;line-height:13px;color:#7719aa;letter-spacing:-0.203px">New section</div>
<div class="t" style="left:40px;top:303px;font-size:9px;line-height:13px;color:#1b1b1b;font-weight:700;letter-spacing:-0.336px">School Notebook</div>
<div class="t" style="left:171px;top:132px;font-size:9px;line-height:13px;color:#8a2fbf;-webkit-text-stroke:.25px #8a2fbf;letter-spacing:-0.078px">Add page</div>
<div class="t" style="left:146.6px;top:158px;font-size:9px;line-height:13px;color:#444;letter-spacing:-0.358px">Lungs</div>
<div class="t" style="left:146.6px;top:179px;font-size:9px;line-height:13px;color:#444;letter-spacing:-0.226px">Kidney</div>
<div class="t" style="left:146.6px;top:199px;font-size:9px;line-height:13px;color:#1b1b1b;font-weight:700;letter-spacing:-0.262px">Human heart</div>
<div class="t" style="left:146.6px;top:220px;font-size:9px;line-height:13px;color:#444;letter-spacing:-0.229px">Brain</div>
<div class="t" style="left:302.3px;top:147px;font-size:20.5px;line-height:29px;color:#262626;-webkit-text-stroke:.5px #fff;letter-spacing:0.248px">Human heart</div>
<div class="t" style="left:302px;top:187px;font-size:8.5px;line-height:12px;color:#969696;letter-spacing:0.019px">Wednesday, October 18, 2023</div>
<div class="t" style="left:301.6px;top:220px;font-size:9px;line-height:13px;color:#262626;transform:scaleX(0.9869)">If the heart stops beating, in about 4-6 minutes of no blood flow, brain cells begin to die and</div>
<div class="t" style="left:301.6px;top:232px;font-size:9px;line-height:13px;color:#262626;transform:scaleX(0.9795)">after 10 minutes of no blood flow, the brain cells will cease to function and effectively be dead.</div>
<div class="t" style="left:301.6px;top:244px;font-size:9px;line-height:13px;color:#262626;transform:scaleX(0.9644)">The heart works by a regulated series of events that cause this muscular organ to contract</div>
<div class="t" style="left:301.6px;top:255px;font-size:9px;line-height:13px;color:#262626;transform:scaleX(0.9721)">(squeeze to push blood) and then relax (refill with blood). The normal heart has 4 chambers that</div>
<div class="t" style="left:301.6px;top:267px;font-size:9px;line-height:13px;color:#262626;transform:scaleX(0.9627)">undergo the squeeze and relax cycle at specific time intervals.</div>
<div class="t" style="left:294.2px;top:221px;font-size:8px;line-height:11px;color:#222">•</div>
<div class="t" style="left:294.2px;top:245px;font-size:8px;line-height:11px;color:#222">•</div>
<div class="t" style="left:301.6px;top:291px;font-size:9px;line-height:13px;color:#0b62c4;text-decoration:underline;background:#f2f7fd;transform:scaleX(0.9561)">Human Anatomy Series Pt.1-Lecture Recording.mp4</div>
<div class="t" style="left:312px;top:499px;font-size:9.6px;line-height:13px;color:#fff;font-weight:700;letter-spacing:-0.15px">Human Anatomy Series Pt.1</div>
<div class="t" style="left:610.4px;top:500px;font-size:6.8px;line-height:10px;color:#fff;letter-spacing:-0.098px">Microsoft Stream</div>
</body></html>
